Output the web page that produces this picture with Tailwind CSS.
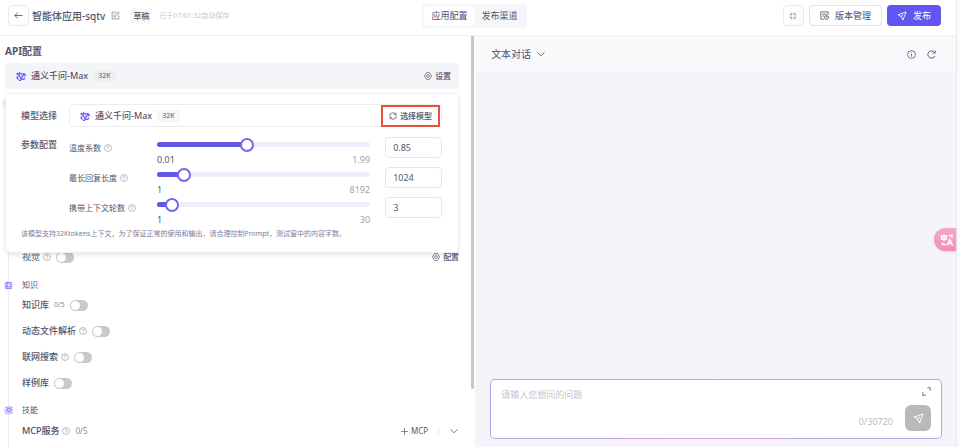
<!DOCTYPE html>
<html lang="zh-CN">

<head>
    <meta charset="UTF-8">
    <title>智能体应用-sqtv</title>
    <script src="https://cdn.jsdelivr.net/npm/@tailwindcss/browser@4"></script>
</head>

<body class="flex h-screen overflow-hidden bg-white font-['Noto_Sans','Noto_Sans_CJK_SC',sans-serif] text-[9px] leading-[18px] text-[#56566b]">

    <!-- Shared icons -->
    <svg class="hidden">
        <symbol id="help" viewBox="0 0 16 16" fill="none" stroke="currentColor" stroke-width="1.3">
            <circle cx="8" cy="8" r="7" />
            <path d="M5.8 6.4a2.2 2.2 0 1 1 3.2 2c-.7.4-1 .7-1 1.4M8 11v1.3" />
        </symbol>
        <symbol id="gear" viewBox="0 0 16 16" fill="none" stroke="currentColor" stroke-width="1.4">
            <path d="M5 1.2h6L15.2 8 11 14.8H5L.8 8z" stroke-linejoin="round" />
            <circle cx="8" cy="8" r="2.8" />
        </symbol>
        <symbol id="plane" viewBox="0 0 16 16" fill="none" stroke="currentColor" stroke-width="1.4" stroke-linejoin="round">
            <path d="M14.5 1.5 1.5 6l5 2.8 3 5.7zM6.5 8.8l3.5-3" />
        </symbol>
        <symbol id="qwen" viewBox="0 0 16 16" fill="none" stroke="#6a5df0" stroke-width="2" stroke-linejoin="round">
            <path d="M6.500 1.500 5 4.500h8.500L15 7l-2 1.500M1.200 5.500h3L8.500 13 7 15H4.500M1.200 5.500 2.800 3M14 11l-1.500 2.500H9.500M4.500 12.500H2.500L1.500 10.500 3.500 8M12.500 5 8.500 12" />
            <path d="M6 7.500h4L8 11z" fill="#a79ff7" stroke="none" />
        </symbol>
        <symbol id="down" viewBox="0 0 16 16" fill="none" stroke="currentColor" stroke-width="1.6">
            <path d="m1 5 7 6.500L15 5" />
        </symbol>
    </svg>

    <div class="flex min-w-0 flex-1 flex-col">
        <!-- Top bar -->
        <header class="flex h-9 shrink-0 items-center border-b border-[#f0f0f3] pr-[15px] pb-1 pl-2">
            <div class="flex flex-1 items-center">
                <button class="flex size-[21px] items-center justify-center rounded border border-[#e8e8ee]" aria-label="返回">
                    <svg class="size-[9px]" viewBox="0 0 16 16" fill="none" stroke="#55556a" stroke-width="1.6"><path d="M15 8H1.500M6.500 3 1.500 8l5 5" /></svg>
                </button>
                <h1 class="ml-[3px] text-[10px] font-medium text-[#55556d]">智能体应用-sqtv</h1>
                <button class="ml-1.5" aria-label="编辑名称">
                    <svg class="size-[9px]" viewBox="0 0 16 16" fill="none" stroke="#8c8ca6" stroke-width="1.5"><path d="M9 2H2v12h12V8M5.5 10.5l.5-2.8L12.5 1.2l2.2 2.2L8.2 10z" /></svg>
                </button>
                <span class="ml-2.5 rounded bg-[#f8f8fa] px-[3px] text-[8px] leading-4 font-medium text-[#55556d]">草稿</span>
                <span class="ml-[7px] text-[7px] text-[#c6c6ce]">已于07:01:32自动保存</span>
            </div>
            <nav class="flex rounded bg-[#f6f6f8] p-0.5 text-[9px]">
                <button class="h-5 rounded bg-white px-[7px] text-[#4d4d78]">应用配置</button>
                <button class="h-5 px-[7px]">发布渠道</button>
            </nav>
            <div class="flex flex-1 items-center justify-end gap-[5px]">
                <button class="flex size-[21px] items-center justify-center rounded border border-[#e8e8ee]" aria-label="收起">
                    <svg class="size-2" viewBox="0 0 16 16" fill="none" stroke="#77778a" stroke-width="1.6"><path d="M5.500 1v4.500H1M10.500 1v4.500H15M5.500 15v-4.500H1M10.500 15v-4.500H15" /></svg>
                </button>
                <button class="flex h-[21px] items-center gap-[6px] rounded border border-[#e2e2e8] px-2.5 text-[#4d4d63]">
                    <svg class="size-[9px]" viewBox="0 0 16 16" fill="none" stroke="currentColor" stroke-width="1.4"><path d="M14.500 7V1.500h-13v13H7M4 5.500h8M4 9h3" /><circle cx="11.500" cy="11.500" r="3.500" /><path d="M11.500 9.500v2H13" /></svg>
                    版本管理
                </button>
                <button class="flex h-[21px] items-center gap-1.5 rounded bg-[#6157f0] px-2.5 text-white">
                    <svg class="size-2.5"><use href="#plane" /></svg>
                    发布
                </button>
            </div>
        </header>

        <main class="flex min-h-0 flex-1">
            <!-- Config column -->
            <section class="flex min-w-0 flex-[0_1_49.7%] overflow-hidden">
                <div class="min-w-0 flex-1 pt-1.5 pr-3 pl-[5px]">
                    <h2 class="text-[10px] font-bold text-[#55556d]">API配置</h2>
                    <div class="mt-[3px] flex h-[26px] items-center rounded bg-[#f4f5f8] pr-2 pl-[11px]">
                        <svg class="size-2.5"><use href="#qwen" /></svg>
                        <span class="ml-[5px] font-medium">通义千问-Max</span>
                        <span class="ml-[5px] rounded bg-[#eeeff2] px-[5px] text-[7px] leading-3">32K</span>
                        <button class="ml-auto flex items-center gap-[3px] text-[8px] font-medium"><svg class="size-2"><use href="#gear" /></svg>设置</button>
                    </div>

                    <div class="relative pt-[159px]">
                        <!-- Rail with section icons -->
                        <div class="absolute top-1 left-[3px] h-screen w-px bg-[#ececf3]"></div>
                        <div class="absolute top-2.5 -left-[3px] size-2.5 rounded-full bg-[#eeecfc]"></div>

                        <div class="flex h-[18px] items-center pl-[17px]">
                            <label for="vision">视觉</label>
                            <svg class="ml-[3px] size-2 text-[#9a9aa8]"><use href="#help" /></svg>
                            <input id="vision" type="checkbox" class="ml-[5px] flex h-[11px] w-[18px] appearance-none items-center rounded-full bg-[#c9c9cd] pl-px before:size-[9px] before:rounded-full before:bg-white checked:bg-[#6157f0] checked:pl-2">
                            <button class="ml-auto flex items-center gap-[3px] text-[8px] font-medium"><svg class="size-2"><use href="#gear" /></svg>配置</button>
                        </div>

                        <h3 class="relative mt-2.5 -ml-px flex items-center text-[8px]">
                            <span class="flex size-[9px] items-center justify-center rounded-sm bg-[#e9e6ff]">
                                <svg class="size-[7px]" viewBox="0 0 16 16" fill="none" stroke="#7a6ff0" stroke-width="1.8"><path d="M2 1h12v14H2zM2 11h12M5 1v10M8 4.500h3" /></svg>
                            </span>
                            <span class="ml-[9px]">知识</span>
                        </h3>
                        <div class="mt-0.5 flex flex-col gap-2 pl-[17px] font-medium">
                            <div class="flex h-[18px] items-center">
                                <label for="kb">知识库</label>
                                <span class="ml-[5px] text-[7px] font-normal text-[#8c8c99]">0/5</span>
                                <input id="kb" type="checkbox" class="ml-[5px] flex h-[11px] w-[18px] appearance-none items-center rounded-full bg-[#c9c9cd] pl-px before:size-[9px] before:rounded-full before:bg-white checked:bg-[#6157f0] checked:pl-2">
                            </div>
                            <div class="flex h-[18px] items-center">
                                <label for="parse">动态文件解析</label>
                                <svg class="ml-[3px] size-2 text-[#9a9aa8]"><use href="#help" /></svg>
                                <input id="parse" type="checkbox" class="ml-[5px] flex h-[11px] w-[18px] appearance-none items-center rounded-full bg-[#c9c9cd] pl-px before:size-[9px] before:rounded-full before:bg-white checked:bg-[#6157f0] checked:pl-2">
                            </div>
                            <div class="flex h-[18px] items-center">
                                <label for="web">联网搜索</label>
                                <svg class="ml-[3px] size-2 text-[#9a9aa8]"><use href="#help" /></svg>
                                <input id="web" type="checkbox" class="ml-[5px] flex h-[11px] w-[18px] appearance-none items-center rounded-full bg-[#c9c9cd] pl-px before:size-[9px] before:rounded-full before:bg-white checked:bg-[#6157f0] checked:pl-2">
                            </div>
                            <div class="flex h-[18px] items-center">
                                <label for="samples">样例库</label>
                                <input id="samples" type="checkbox" class="ml-[5px] flex h-[11px] w-[18px] appearance-none items-center rounded-full bg-[#c9c9cd] pl-px before:size-[9px] before:rounded-full before:bg-white checked:bg-[#6157f0] checked:pl-2">
                            </div>
                        </div>

                        <h3 class="relative mt-[9px] -ml-px flex items-center text-[8px]">
                            <span class="flex size-[9px] items-center justify-center rounded-sm bg-[#e9e6ff]">
                                <svg class="size-2" viewBox="0 0 16 16" fill="none" stroke="#7a6ff0" stroke-width="1.6"><circle cx="8" cy="8" r="3" /><path d="M1 2.500h4M11 2.500h4M1 14h3M12 14h3M8 1v3M8 12v3M1 8h3M12 8h3M3.500 4l2 2M12.500 4l-2 2M4 12.500l2-2M12 12.500l-2-2" /></svg>
                            </span>
                            <span class="ml-[9px]">技能</span>
                        </h3>
                        <div class="mt-[3px] flex h-[18px] items-center pl-[17px]">
                            <span class="font-medium text-[#4b4b63]">MCP服务</span>
                            <svg class="ml-[3px] size-2 text-[#9a9aa8]"><use href="#help" /></svg>
                            <span class="ml-[5px] text-[8px] text-[#8c8c99]">0/5</span>
                            <button class="ml-auto flex items-center gap-[3px] text-[8px]">
                                <svg class="size-[7px]" viewBox="0 0 16 16" stroke="currentColor" stroke-width="1.6"><path d="M8 0v16M0 8h16" /></svg>MCP
                            </button>
                            <span class="ml-2.5 h-2 w-px bg-[#ececf0]"></span>
                            <button class="mr-px ml-[11px]" aria-label="展开"><svg class="size-2"><use href="#down" /></svg></button>
                        </div>

                        <!-- Model settings popover -->
                        <div class="absolute inset-x-0 top-1 h-40 rounded-md border border-[#f0f0f4] bg-white pt-2.5 pr-4 pl-[15px] shadow-[0_2px_4px] shadow-black/10">
                            <div class="flex items-center">
                                <span class="w-12 font-medium">模型选择</span>
                                <div class="flex h-[23px] flex-1 items-center rounded border border-[#ececf0] pl-2.5">
                                    <svg class="size-2.5"><use href="#qwen" /></svg>
                                    <span class="ml-[5px] font-medium">通义千问-Max</span>
                                    <span class="ml-[5px] rounded bg-[#f6f6f8] px-[5px] text-[7px] leading-3">32K</span>
                                    <button class="mr-px ml-auto flex h-[22px] items-center gap-[3px] border-2 border-[#e5533f] px-1.5 text-[8px] font-medium text-[#4d4d63]">
                                        <svg class="size-2" viewBox="0 0 16 16" fill="none" stroke="currentColor" stroke-width="1.6"><path d="M1.500 9V7a6.500 6.500 0 0 1 12-2M14.500 7v2a6.500 6.500 0 0 1-12 2M14 1.500V5h-3.500M2 14.500V11h3.500" /></svg>
                                        选择模型
                                    </button>
                                </div>
                            </div>

                            <div class="mt-[9px] flex">
                                <span class="w-12 font-medium">参数配置</span>
                                <div class="flex-1 pt-px">
                                    <div class="flex h-[30px]">
                                        <label for="temp" class="flex h-[21px] w-[88px] items-center gap-[3px] text-[8px]">温度系数<svg class="size-2 text-[#9a9aa8]"><use href="#help" /></svg></label>
                                        <div class="flex-1">
                                            <div class="relative my-[5px] h-[5px] rounded-full bg-[#f0eefd]">
                                                <div class="h-full rounded-full bg-[#6157e6]" style="width: 42.4%"></div>
                                                <input id="temp" type="range" min="0.01" max="1.99" step="0.01" value="0.85" class="absolute inset-y-0 -left-[7px] w-[calc(100%+14px)] appearance-none bg-transparent [&::-webkit-slider-thumb]:size-3.5 [&::-webkit-slider-thumb]:appearance-none [&::-webkit-slider-thumb]:rounded-full [&::-webkit-slider-thumb]:border-2 [&::-webkit-slider-thumb]:border-[#7369e8] [&::-webkit-slider-thumb]:bg-white">
                                            </div>
                                            <div class="flex justify-between leading-4"><span>0.01</span><span class="text-[#a3a3ad]">1.99</span></div>
                                        </div>
                                        <input aria-label="温度系数" value="0.85" class="ml-[15px] h-[21px] w-[57px] rounded border border-[#e6e6ec] px-[7px]">
                                    </div>
                                    <div class="flex h-[30px]">
                                        <label for="len" class="flex h-[21px] w-[88px] items-center gap-[3px] text-[8px]">最长回复长度<svg class="size-2 text-[#9a9aa8]"><use href="#help" /></svg></label>
                                        <div class="flex-1">
                                            <div class="relative my-[5px] h-[5px] rounded-full bg-[#f0eefd]">
                                                <div class="h-full rounded-full bg-[#6157e6]" style="width: 12.5%"></div>
                                                <input id="len" type="range" min="1" max="8192" value="1024" class="absolute inset-y-0 -left-[7px] w-[calc(100%+14px)] appearance-none bg-transparent [&::-webkit-slider-thumb]:size-3.5 [&::-webkit-slider-thumb]:appearance-none [&::-webkit-slider-thumb]:rounded-full [&::-webkit-slider-thumb]:border-2 [&::-webkit-slider-thumb]:border-[#7369e8] [&::-webkit-slider-thumb]:bg-white">
                                            </div>
                                            <div class="flex justify-between leading-4"><span>1</span><span class="text-[#a3a3ad]">8192</span></div>
                                        </div>
                                        <input aria-label="最长回复长度" value="1024" class="ml-[15px] h-[21px] w-[57px] rounded border border-[#e6e6ec] px-[7px]">
                                    </div>
                                    <div class="flex h-[30px]">
                                        <label for="turns" class="flex h-[21px] w-[88px] items-center gap-[3px] text-[8px]">携带上下文轮数<svg class="size-2 text-[#9a9aa8]"><use href="#help" /></svg></label>
                                        <div class="flex-1">
                                            <div class="relative my-[5px] h-[5px] rounded-full bg-[#f0eefd]">
                                                <div class="h-full rounded-full bg-[#6157e6]" style="width: 6.9%"></div>
                                                <input id="turns" type="range" min="1" max="30" value="3" class="absolute inset-y-0 -left-[7px] w-[calc(100%+14px)] appearance-none bg-transparent [&::-webkit-slider-thumb]:size-3.5 [&::-webkit-slider-thumb]:appearance-none [&::-webkit-slider-thumb]:rounded-full [&::-webkit-slider-thumb]:border-2 [&::-webkit-slider-thumb]:border-[#7369e8] [&::-webkit-slider-thumb]:bg-white">
                                            </div>
                                            <div class="flex justify-between leading-4"><span>1</span><span class="text-[#a3a3ad]">30</span></div>
                                        </div>
                                        <input aria-label="携带上下文轮数" value="3" class="ml-[15px] h-[21px] w-[57px] rounded border border-[#e6e6ec] px-[7px]">
                                    </div>
                                </div>
                            </div>
                            <p class="text-[7px] leading-[14px] whitespace-nowrap text-[#7d7d98]">该模型支持32Ktokens上下文，为了保证正常的使用和输出，请合理控制Prompt，测试窗中的内容字数。</p>
                        </div>
                    </div>
                </div>
                <div class="w-1 shrink-0"><div class="h-[86%] w-[3px] rounded-b bg-[#c6c7cc]"></div></div>
            </section>

            <!-- Chat column -->
            <section class="flex min-w-0 flex-1 flex-col bg-[#f4f4fa]">
                <div class="flex h-9 items-center bg-[#f9f9fc] pr-5 pl-4">
                    <button class="flex items-center gap-1.5 text-[10px] text-[#4d4d63]">文本对话<svg class="size-2"><use href="#down" /></svg></button>
                    <button class="ml-auto" aria-label="信息">
                        <svg class="size-[9px]" viewBox="0 0 16 16" fill="none" stroke="currentColor" stroke-width="1.4"><circle cx="8" cy="8" r="7" /><path d="M8 7v5M8 4v1.500" /></svg>
                    </button>
                    <button class="ml-[11px]" aria-label="刷新">
                        <svg class="size-[9px]" viewBox="0 0 16 16" fill="none" stroke="currentColor" stroke-width="1.7"><path d="M14 10.500A6.500 6.500 0 1 1 13.500 4.500M14.500 1v4.500H10" /></svg>
                    </button>
                </div>
                <div class="mt-auto mr-3.5 mb-2 ml-[15px] rounded-[5px] bg-linear-to-r from-[#b9a3ee] via-[#cfa6e6] to-[#b3a5f2] p-px">
                    <div class="flex h-[58px] rounded bg-white px-2.5">
                        <textarea aria-label="提问" placeholder="请输入您想问的问题" class="min-w-0 flex-1 resize-none pt-1.5 outline-none placeholder:text-[#c4c4cb]"></textarea>
                        <span class="mr-3 self-end pb-[7px] text-[#bcbcc4]">0/30720</span>
                        <div class="flex flex-col items-end justify-between py-[7px]">
                            <button aria-label="放大"><svg class="size-[9px]" viewBox="0 0 16 16" fill="none" stroke="#77777f" stroke-width="1.8"><path d="M9.500 1.500h5v5M1.500 9.500v5h5" /></svg></button>
                            <button class="flex size-[26px] items-center justify-center rounded-md bg-[#b9b9bb] text-white" aria-label="发送"><svg class="size-[11px]"><use href="#plane" /></svg></button>
                        </div>
                    </div>
                </div>
            </section>
        </main>
    </div>
    <div class="w-1 shrink-0 border-l border-[#e9e9ee] bg-[#fafafb]"></div>

    <!-- Floating translate tab -->
    <button class="fixed top-[228px] right-1 flex h-[23px] w-[22px] items-center justify-center rounded-l-full bg-linear-to-b from-[#f7a6c9] to-[#f08fb9] shadow-sm shadow-black/10" aria-label="翻译">
        <svg class="ml-1 size-3.5" viewBox="0 0 14 14" fill="none" stroke="#fff" stroke-width="1.4">
            <path d="M1.500 3h5v3h-5zM4 1.500V8M8.500 2.500H12V5M2.500 9.500v2H6" />
            <path d="m7 12.500 2.800-6 2.800 6M8.500 10.500h3" />
        </svg>
    </button>
</body>

</html>
